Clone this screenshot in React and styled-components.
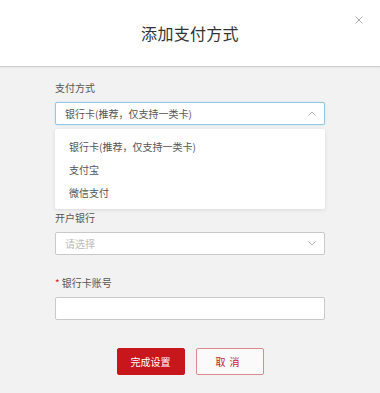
import styled, { createGlobalStyle } from 'styled-components';

const Global = createGlobalStyle`
  html, body {
    margin: 0;
    padding: 0;
    background: #f2f2f2;
    font-family: "Noto Sans CJK SC", "Noto Sans", sans-serif;
  }
`;

const Dialog = styled.div`
  width: 380px;
  height: 393px;
  background: #f2f2f2;
  display: flex;
  flex-direction: column;
  overflow: hidden;
`;

const Header = styled.header`
  position: relative;
  height: 66px;
  background: #fff;
  border-bottom: 1px solid #cfcfcf;
  box-shadow: 0 1px 2px rgba(0, 0, 0, 0.06);
  display: flex;
  align-items: center;
  justify-content: center;
`;

const Title = styled.h1`
  margin: 0;
  font-size: 16px;
  font-weight: 400;
  color: #333;
  letter-spacing: 0.3px;
`;

const Close = styled.button`
  position: absolute;
  top: 14px;
  right: 15px;
  width: 12px;
  height: 12px;
  padding: 0;
  border: 0;
  background: none;
  display: flex;
  align-items: center;
  justify-content: center;
`;

const Form = styled.div`
  width: 270px;
  margin: 0 auto;
  padding-top: 14px;
  display: flex;
  flex-direction: column;
`;

const Field = styled.div`
  position: relative;
  display: flex;
  flex-direction: column;
  margin-bottom: ${({ $gap }) => $gap}px;
`;

const Label = styled.div`
  font-size: 10px;
  line-height: 14px;
  color: #555;
  margin-bottom: 7px;
`;

const Star = styled.span`
  color: #d9232a;
  margin-right: 2px;
`;

const Box = styled.div`
  height: 23px;
  box-sizing: border-box;
  background: #fff;
  border: 1px solid ${({ $focus }) => ($focus ? '#93c7e6' : '#c9c9c9')};
  border-radius: 2px;
  box-shadow: ${({ $focus }) => ($focus ? '0 0 2px rgba(120,180,220,0.35)' : 'none')};
  display: flex;
  align-items: center;
  justify-content: space-between;
  padding: 0 8px 0 9px;
  font-size: 10px;
  color: ${({ $placeholder }) => ($placeholder ? '#bdbdbd' : '#555')};
`;

const Menu = styled.ul`
  position: absolute;
  left: 0;
  right: 0;
  top: 48px;
  margin: 0;
  padding: 6px 0 5px;
  list-style: none;
  background: #fff;
  border-radius: 2px;
  box-shadow: 0 1px 4px rgba(0, 0, 0, 0.1);
  z-index: 2;
`;

const Option = styled.li`
  height: 23px;
  line-height: 23px;
  padding-left: 14px;
  font-size: 10px;
  color: #555;
`;

const Actions = styled.div`
  display: flex;
  justify-content: center;
  gap: 11px;
  margin-top: 28px;
`;

const Button = styled.button`
  width: 68px;
  height: 27px;
  box-sizing: border-box;
  border-radius: 2px;
  font-family: inherit;
  font-size: 10px;
  letter-spacing: ${({ $primary }) => ($primary ? '0' : '4px')};
  padding: 0;
  border: 1px solid ${({ $primary }) => ($primary ? '#c8161d' : '#dc8a8d')};
  background: ${({ $primary }) => ($primary ? '#c8161d' : '#fafafa')};
  color: ${({ $primary }) => ($primary ? '#fff' : '#c8161d')};
`;

const Chevron = ({ up }) => (
  <svg width="8" height="5" viewBox="0 0 8 5">
    <path
      d={up ? 'M0.5 4.5 L4 1 L7.5 4.5' : 'M0.5 0.5 L4 4 L7.5 0.5'}
      fill="none"
      stroke="#aaa"
      strokeWidth="0.9"
    />
  </svg>
);

export default function App() {
  return (
    <Dialog>
      <Global />
      <Header>
        <Title>添加支付方式</Title>
        <Close aria-label="关闭">
          <svg width="8" height="8" viewBox="0 0 8 8">
            <path d="M0.5 0.5 L7.5 7.5 M7.5 0.5 L0.5 7.5" stroke="#a0a0a0" strokeWidth="0.9" />
          </svg>
        </Close>
      </Header>
      <Form>
        <Field $gap={86}>
          <Label>支付方式</Label>
          <Box $focus>
            <span>银行卡(推荐，仅支持一类卡)</span>
            <Chevron up />
          </Box>
          <Menu>
            <Option>银行卡(推荐，仅支持一类卡)</Option>
            <Option>支付宝</Option>
            <Option>微信支付</Option>
          </Menu>
        </Field>
        <Field $gap={21}>
          <Label>开户银行</Label>
          <Box $placeholder>
            <span>请选择</span>
            <Chevron />
          </Box>
        </Field>
        <Field $gap={0}>
          <Label>
            <Star>*</Star>银行卡账号
          </Label>
          <Box />
        </Field>
        <Actions>
          <Button $primary>完成设置</Button>
          <Button>取消</Button>
        </Actions>
      </Form>
    </Dialog>
  );
}
